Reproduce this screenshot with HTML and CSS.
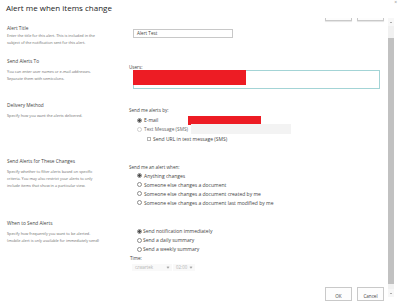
FILE: index.html
```html
<!DOCTYPE html>
<html>
<head>
<meta charset="utf-8">
<title>Alert me when items change</title>
<link rel="stylesheet" href="styles.css">
</head>
<body>
<div class="dialog">
  <div class="dlg-head">
    <h1 class="dlg-title">Alert me when items change</h1>
    <span class="dlg-close">&times;</span>
  </div>

  <div class="dlg-body">
    <div class="pane">
      <!-- top button row, scrolled mostly out of view -->
      <div class="btn-row top"><span class="btn"></span><span class="btn"></span></div>

      <div class="section s-title">
        <div class="info">
          <h3>Alert Title</h3>
          <p>Enter the title for this alert. This is included in the<br>subject of the notification sent for this alert.</p>
        </div>
        <div class="ctrl">
          <div class="textbox">Alert Test</div>
        </div>
      </div>

      <div class="section s-to">
        <div class="info">
          <h3>Send Alerts To</h3>
          <p>You can enter user names or e-mail addresses.<br>Separate them with semicolons.</p>
        </div>
        <div class="ctrl">
          <div class="ctrl-label">Users:</div>
          <div class="people"><span class="redact"></span></div>
        </div>
      </div>

      <div class="section s-delivery">
        <div class="info">
          <h3>Delivery Method</h3>
          <p>Specify how you want the alerts delivered.</p>
        </div>
        <div class="ctrl">
          <div class="ctrl-label">Send me alerts by:</div>
          <div class="opt"><span class="radio on"></span><span class="opt-text fixed">E-mail</span><span class="redact inline"></span></div>
          <div class="opt dim"><span class="radio off"></span><span class="opt-text fixed">Text Message (SMS)</span><span class="smsbox"></span></div>
          <div class="opt sub"><span class="check"></span><span class="opt-text">Send URL in text message (SMS)</span></div>
        </div>
      </div>

      <div class="section s-changes">
        <div class="info">
          <h3>Send Alerts for These Changes</h3>
          <p>Specify whether to filter alerts based on specific<br>criteria. You may also restrict your alerts to only<br>include items that show in a particular view.</p>
        </div>
        <div class="ctrl">
          <div class="ctrl-label">Send me an alert when:</div>
          <div class="opt"><span class="radio on"></span><span class="opt-text">Anything changes</span></div>
          <div class="opt"><span class="radio"></span><span class="opt-text">Someone else changes a document</span></div>
          <div class="opt"><span class="radio"></span><span class="opt-text">Someone else changes a document created by me</span></div>
          <div class="opt"><span class="radio"></span><span class="opt-text">Someone else changes a document last modified by me</span></div>
        </div>
      </div>

      <div class="section s-when">
        <div class="info">
          <h3>When to Send Alerts</h3>
          <p>Specify how frequently you want to be alerted.<br>(mobile alert is only available for immediately send)</p>
        </div>
        <div class="ctrl">
          <div class="opt tight"><span class="radio on"></span><span class="opt-text">Send notification immediately</span></div>
          <div class="opt tight"><span class="radio"></span><span class="opt-text">Send a daily summary</span></div>
          <div class="opt tight"><span class="radio"></span><span class="opt-text">Send a weekly summary</span></div>
          <div class="ctrl-label time">Time:</div>
          <div class="selects">
            <span class="select day">czwartek<i class="chev"></i></span>
            <span class="select hour">02:00<i class="chev"></i></span>
          </div>
        </div>
      </div>

      <div class="btn-row bottom"><span class="btn">OK</span><span class="btn">Cancel</span></div>
    </div>

    <div class="scrollbar">
      <span class="sb-arrow up"></span>
      <span class="sb-thumb"></span>
      <span class="sb-arrow down"></span>
    </div>
  </div>
</div>
</body>
</html>
```

FILE: styles.css
```css
* {
  box-sizing: border-box;
}

body {
  margin: 0;
  background: #fff;
  color: #444;
  font-family: "Open Sans", "Noto Sans", sans-serif;
}

.dialog {
  position: relative;
  width: 400px;
  height: 303px;
  overflow: hidden;
  display: flex;
  flex-direction: column;
}

/* header */
.dlg-head {
  height: 14px;
  padding: 1.5px 0 0 6px;
}

.dlg-title {
  margin: 0;
  font-size: 8px;
  font-weight: normal;
  line-height: 11px;
  color: #222;
}

.dlg-close {
  position: absolute;
  top: 0;
  right: 3px;
  font-size: 5px;
  line-height: 4px;
  color: #8a8a8a;
}

/* body: pane + scrollbar */
.dlg-body {
  flex: 1;
  min-height: 0;
  display: flex;
}

.pane {
  flex: 1;
  overflow: hidden;
  padding: 0 4px 0 7px;
}

.btn-row {
  display: flex;
  justify-content: flex-end;
  gap: 5px;
}

.btn {
  width: 27px;
  border: 1px solid #c9c9c9;
  background: #fdfdfd;
  font-size: 4.6px;
  color: #444;
  text-align: center;
}

.btn-row.top {
  margin-top: 4px;
}

.btn-row.top .btn {
  height: 3px;
  border-top: none;
  box-shadow: 0 1px 1px #e4e4e4;
}

.btn-row.bottom {
  margin-top: 16px;
}

.btn-row.bottom .btn {
  height: 14px;
  line-height: 16px;
}

/* form sections */
.section {
  display: flex;
}

.info {
  width: 122px;
  flex: none;
}

.info h3 {
  margin: 0;
  font-size: 4.8px;
  font-weight: normal;
  line-height: 6px;
  color: #444;
}

.info p {
  margin: 4px 0 0;
  font-size: 3.85px;
  line-height: 7px;
  color: #6e6e6e;
}

.ctrl {
  flex: 1;
}

.ctrl-label {
  font-size: 4.6px;
  line-height: 6px;
  color: #444;
}

.s-title {
  margin-top: 3.5px;
  height: 33.5px;
}

.s-title .info p {
  margin-top: 1px;
}

.s-title .ctrl {
  padding-top: 4.5px;
}

.textbox {
  width: 100px;
  height: 9px;
  margin-left: 4px;
  padding-left: 3px;
  border: 1px solid #c8c8c8;
  font-size: 4.6px;
  line-height: 7px;
  color: #444;
}

.s-to {
  height: 44px;
}

.s-to .ctrl {
  padding-top: 5.5px;
}

.people {
  position: relative;
  width: 247px;
  height: 19px;
  margin: 0.5px 0 0 4px;
  border: 1px solid #a3d4d6;
}

.redact {
  background: #ed1c24;
}

.people .redact {
  position: absolute;
  left: -1px;
  top: -1px;
  width: 113px;
  height: 15px;
}

.redact.inline {
  display: block;
  width: 73px;
  height: 9px;
  margin-left: -3px;
}

.s-delivery {
  height: 56px;
}

.s-delivery .ctrl {
  padding-top: 5px;
}

.s-delivery .ctrl-label {
  margin-bottom: 2.5px;
}

/* radio / checkbox rows */
.opt {
  display: flex;
  align-items: center;
  height: 9px;
  padding-left: 8px;
  font-size: 5px;
  color: #444;
}

.opt-text {
  margin-left: 2px;
  white-space: nowrap;
}

.opt-text.fixed {
  flex: none;
  width: 47px;
}

.opt.dim .opt-text {
  color: #666;
  font-size: 4.8px;
}

.opt.sub {
  height: 11px;
  padding-left: 17.5px;
}

.opt.tight .opt-text {
  margin-left: 1px;
}

.radio {
  flex: none;
  width: 5px;
  height: 5px;
  border: 0.7px solid #8c8c8c;
  border-radius: 50%;
  background: #fff;
}

.radio.on {
  background: radial-gradient(circle, #4d4d4d 0 1.2px, #fff 1.6px);
}

.radio.off {
  border-color: #cfcfcf;
}

.check {
  flex: none;
  width: 4.5px;
  height: 4.5px;
  border: 0.7px solid #b5b5b5;
}

.smsbox {
  flex: none;
  width: 100px;
  height: 10px;
  background: #f3f3f3;
}

.s-changes {
  height: 61.5px;
}

.s-changes .ctrl {
  padding-top: 5.5px;
}

.s-changes .ctrl-label {
  margin-bottom: 1.5px;
}

.s-when .ctrl {
  padding-top: 7px;
}

.ctrl-label.time {
  margin: 1.5px 0 0 1px;
}

.selects {
  display: flex;
  gap: 1px;
  margin: 3px 0 0 3px;
}

.select {
  position: relative;
  height: 7px;
  padding-left: 3px;
  font-size: 4.4px;
  line-height: 7px;
  color: #b3b3b3;
  background: #f9f9f9;
}

.select.day {
  width: 40px;
}

.select.hour {
  width: 22px;
}

.chev {
  position: absolute;
  right: 3px;
  top: 2px;
  width: 2px;
  height: 2px;
  border-right: 0.7px solid #a8a8a8;
  border-bottom: 0.7px solid #a8a8a8;
  transform: rotate(45deg);
}

/* fake scrollbar */
.scrollbar {
  flex: none;
  width: 6px;
  margin: 4px 6px 6px 0;
  display: flex;
  flex-direction: column;
  align-items: center;
  background: #f1f1f1;
}

.sb-arrow {
  flex: none;
  height: 8px;
  width: 6px;
  display: flex;
  align-items: center;
  justify-content: center;
  background: #f7f7f7;
}

.sb-arrow::before {
  content: "";
  border-left: 1.5px solid transparent;
  border-right: 1.5px solid transparent;
}

.sb-arrow.up::before {
  border-bottom: 1.5px solid #606060;
}

.sb-arrow.down::before {
  border-top: 1.5px solid #606060;
}

.sb-thumb {
  width: 6px;
  height: 246px;
  margin: 12px 0 auto;
  background: #c1c1c1;
}
```
